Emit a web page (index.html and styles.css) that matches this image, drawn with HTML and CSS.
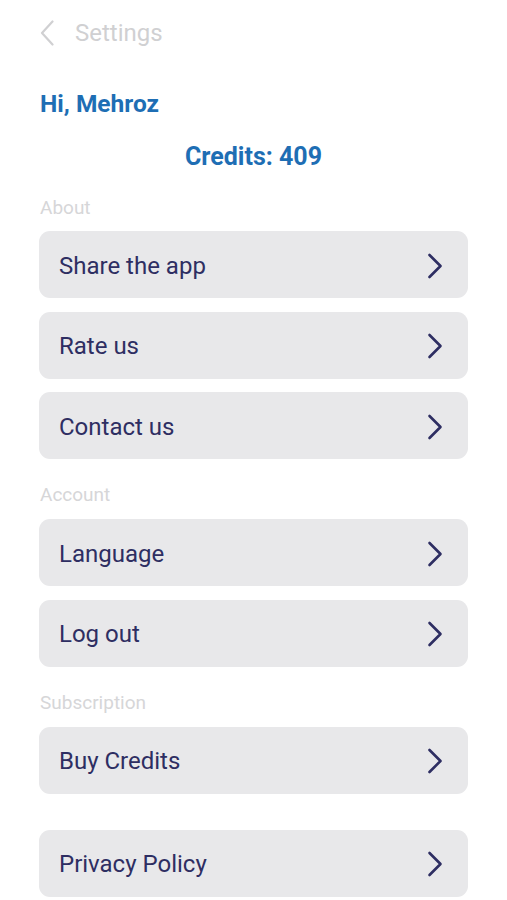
FILE: index.html
```
<!DOCTYPE html>
<html lang="en">

<head>
    <meta charset="UTF-8" />
    <meta name="viewport" content="width=device-width, initial-scale=1.0" />
    <title>Settings</title>
    <link rel="stylesheet" href="styles.css">
</head>

<body>
    <header class="topbar">
        <button class="back" aria-label="Go back">
            <svg width="14" height="26" viewBox="0 0 14 26" aria-hidden="true">
                <path d="M12.5 1.5 L2 13 L12.5 24.5" />
            </svg>
        </button>
        <h1 class="title">Settings</h1>
    </header>

    <!--Chevron used at the end of each row-->
    <svg width="0" height="0" class="sprite" aria-hidden="true">
        <symbol id="chev" viewBox="0 0 16 26">
            <path d="M2.5 2 L13.5 13 L2.5 24" fill="none" stroke="currentColor" stroke-width="2.6"
                stroke-linecap="round" stroke-linejoin="round" />
        </symbol>
    </svg>

    <main class="content">
        <p class="greeting">Hi, Mehroz</p>
        <p class="credits">Credits: 409</p>

        <!-- About -->
        <section class="group">
            <h2 class="group-label">About</h2>
            <ul class="menu" role="list">
                <li><a class="row" href="#share">Share the app <svg class="chev"><use href="#chev" /></svg></a></li>
                <li><a class="row" href="#rate">Rate us <svg class="chev"><use href="#chev" /></svg></a></li>
                <li><a class="row" href="#contact">Contact us <svg class="chev"><use href="#chev" /></svg></a></li>
            </ul>
        </section>

        <!-- Account -->
        <section class="group">
            <h2 class="group-label">Account</h2>
            <ul class="menu" role="list">
                <li><a class="row" href="#language">Language <svg class="chev"><use href="#chev" /></svg></a></li>
                <li><a class="row" href="#logout">Log out <svg class="chev"><use href="#chev" /></svg></a></li>
            </ul>
        </section>

        <!-- Subscription -->
        <section class="group">
            <h2 class="group-label">Subscription</h2>
            <ul class="menu" role="list">
                <li><a class="row" href="#buy">Buy Credits <svg class="chev"><use href="#chev" /></svg></a></li>
            </ul>
        </section>

        <ul class="menu menu-last" role="list">
            <li><a class="row" href="#privacy">Privacy Policy <svg class="chev"><use href="#chev" /></svg></a></li>
        </ul>
    </main>
</body>

</html>
```

FILE: styles.css
```
:root {
    --color-blue: rgb(30, 110, 180);
    --color-navy: rgb(46, 46, 98);
    --color-card: rgb(232, 232, 234);
    --color-muted: rgb(214, 214, 216);
}

* {
    box-sizing: border-box;
}

body {
    margin: 0;
    background: #fff;
    font-family: Roboto, "Liberation Sans", sans-serif;
}

.sprite {
    position: absolute;
}

/* Top bar */
.topbar {
    display: flex;
    align-items: center;
    gap: 21px;
    height: 66px;
    padding: 0 40px;
}

.back {
    all: unset;
    display: flex;
}

.back svg path {
    fill: none;
    stroke: rgb(208, 208, 210);
    stroke-width: 2.2;
    stroke-linecap: round;
    stroke-linejoin: round;
}

.title {
    margin: 0;
    font-size: 24px;
    font-weight: 400;
    color: rgb(208, 208, 210);
}

.content {
    padding: 0 39px;
}

.greeting {
    margin: 24px 0 0 1px;
    font-size: 24.5px;
    line-height: 28px;
    font-weight: 700;
    color: var(--color-blue);
}

.credits {
    margin: 24px 0 0;
    text-align: center;
    font-size: 25px;
    line-height: 30px;
    font-weight: 700;
    color: var(--color-blue);
}

.group-label {
    margin: 26px 0 13px 1px;
    font-size: 19px;
    line-height: 20px;
    font-weight: 400;
    color: var(--color-muted);
}

.group + .group .group-label {
    margin-bottom: 14px;
}

.menu {
    display: flex;
    flex-direction: column;
    gap: 13.5px;
    list-style: none;
    margin: 0;
    padding: 0;
}

.menu-last {
    margin-top: 36px;
}

.row {
    display: flex;
    align-items: center;
    justify-content: space-between;
    height: 67px;
    width: 429px;
    padding: 2px 25px 0 20px;
    border-radius: 11px;
    background: var(--color-card);
    color: var(--color-navy);
    font-size: 24px;
    text-decoration: none;
}

.chev {
    width: 16px;
    height: 26px;
    color: var(--color-navy);
}
```
